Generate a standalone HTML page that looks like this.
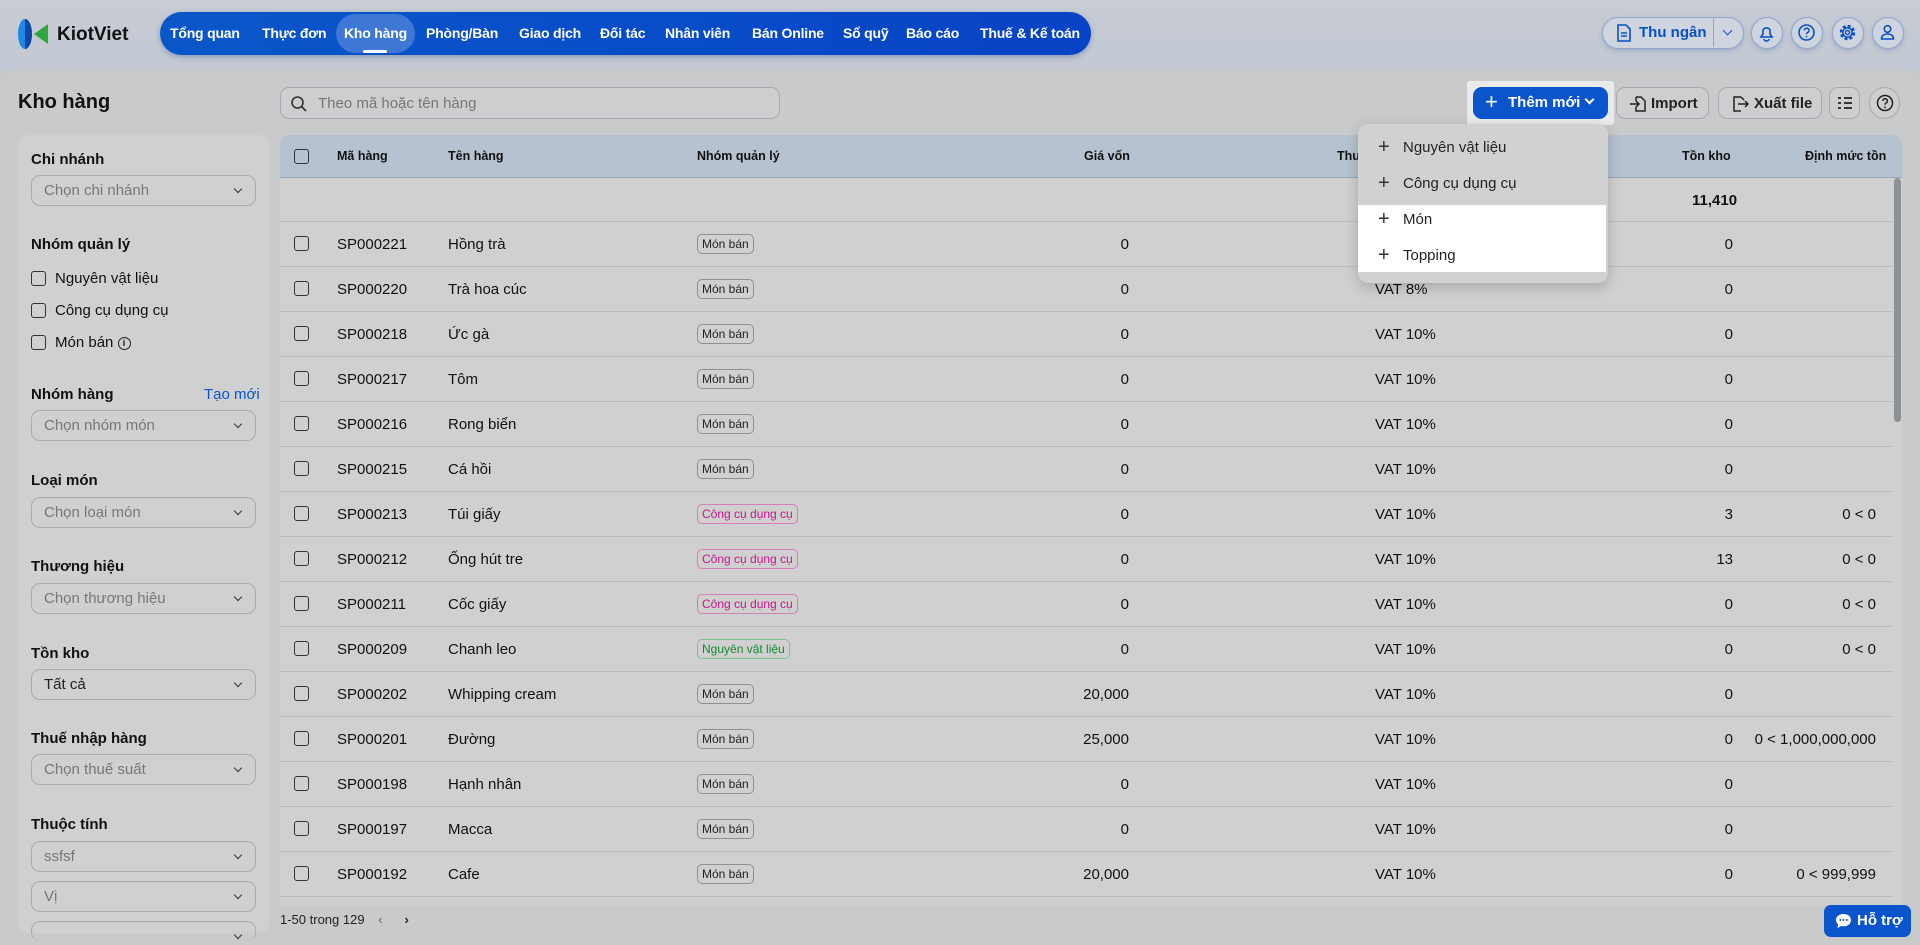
<!DOCTYPE html>
<html><head><meta charset="utf-8"><style>
*{box-sizing:border-box;margin:0;padding:0}
body{width:1920px;height:945px;overflow:hidden;font-family:"Liberation Sans",sans-serif;background:linear-gradient(180deg,#c8ccd3 0,#c2c9d4 70px,#c8c9cb 71px);position:relative;color:#111}
.a{position:absolute;white-space:nowrap}
.nav{left:160px;top:12px;width:931px;height:43px;border-radius:22px;background:linear-gradient(90deg,#0a57c9,#0743c6);box-shadow:0 2px 6px rgba(0,40,120,.3)}
.nv{position:absolute;top:13px;color:#fff;font-size:14px;font-weight:bold;letter-spacing:-0.2px}
.main{left:0;top:70px;width:1920px;height:875px;background:#c9cacc;border-radius:22px 22px 0 0}
.side{left:18px;top:135px;width:251px;height:798px;background:#d0d0d0;border-radius:10px}
.lbl{font-size:15px;font-weight:bold;color:#111}
.sel{position:absolute;left:13px;width:225px;height:31px;border:1px solid #a9abae;border-radius:9px;font-size:15px;color:#777;padding:6px 12px}
.sel:after{content:"";position:absolute;right:14px;top:10px;width:5px;height:5px;border-right:1.5px solid #333;border-bottom:1.5px solid #333;transform:rotate(45deg)}
.cb{position:absolute;width:15px;height:15px;border:1.5px solid #333;border-radius:3px}
.tbl{left:280px;top:135px;width:1622px;height:770px;background:#d0d0d0;border-radius:10px 10px 0 0;overflow:hidden}
.th{position:absolute;left:0;top:0;width:1622px;height:43px;background:#b6c2cf;border-bottom:1px solid #98a9bd}
.h{position:absolute;top:14px;font-size:12.5px;font-weight:bold;color:#111}
.row{position:absolute;left:0;width:1613px;height:45px;border-bottom:1px solid #bcbcbc;font-size:15px}
.row .c{position:absolute;top:14px}
.tag{position:absolute;top:12px;font-size:12px;border:1px solid #8f9094;border-radius:5px;padding:2px 4px;color:#222}
.pk{color:#c6168f;border-color:#d77cbc}
.gr{color:#128a2c;border-color:#7cc28f}
.btn{position:absolute;top:87px;height:32px;border:1px solid #a8aaad;border-radius:9px;font-size:15px;font-weight:bold;color:#222;background:#cdcecf}
.ic{position:absolute;top:17px;width:32px;height:32px;border-radius:50%;border:1.5px solid #8ea7cf;background:#cfd5df;box-shadow:0 2px 5px rgba(60,90,150,.25)}
.dd{left:1358px;top:124px;width:250px;height:159px;background:#d1d1d1;border-radius:10px;box-shadow:0 4px 14px rgba(0,0,0,.2);overflow:hidden}
.di{position:absolute;left:0;width:248px;height:36px;font-size:15px;color:#222}
.di span{position:absolute;left:20px;top:6px;font-size:20px;color:#333;font-weight:300}
.di b{position:absolute;left:45px;top:9px;font-weight:normal}
</style></head><body>
<svg class="a" style="left:16px;top:18px" width="36" height="32" viewBox="0 0 36 32"><ellipse cx="9" cy="16" rx="7" ry="15" fill="#1e88e5"/><path d="M9 1 A7 15 0 0 1 9 31" fill="#0d47a1"/><path d="M32 6 L18 16 L32 26 Z" fill="#2eaa3d"/></svg>
<div class="a" style="left:57px;top:24px;font-size:19px;font-weight:bold;color:#111">KiotViet</div>
<div class="a nav">
<div style="position:absolute;left:176px;top:2px;width:79px;height:39px;border-radius:20px;background:rgba(255,255,255,.22)"></div>
<div style="position:absolute;left:203px;top:38px;width:24px;height:3px;border-radius:2px;background:#fff"></div>
<span class="nv" style="left:10px">Tổng quan</span><span class="nv" style="left:102px">Thực đơn</span><span class="nv" style="left:184px">Kho hàng</span><span class="nv" style="left:266px">Phòng/Bàn</span><span class="nv" style="left:359px">Giao dịch</span><span class="nv" style="left:440px">Đối tác</span><span class="nv" style="left:505px">Nhân viên</span><span class="nv" style="left:592px">Bán Online</span><span class="nv" style="left:683px">Sổ quỹ</span><span class="nv" style="left:746px">Báo cáo</span><span class="nv" style="left:820px">Thuế &amp; Kế toán</span>
</div>
<div class="a" style="left:1602px;top:17px;width:142px;height:32px;border:1.5px solid #8ea7cf;border-radius:16px;background:#cfd5df;box-shadow:0 2px 5px rgba(60,90,150,.25)">
<svg style="position:absolute;left:13px;top:6px" width="16" height="18" viewBox="0 0 16 18"><path d="M2 1h8l4 4v12H2z M5 9h6 M5 12h6" fill="none" stroke="#0a4fc4" stroke-width="1.6"/></svg>
<span style="position:absolute;left:36px;top:6px;font-size:15px;font-weight:bold;color:#0a4fc4">Thu ngân</span>
<div style="position:absolute;left:110px;top:0;width:1px;height:29px;background:#8ea7cf"></div>
<div style="position:absolute;left:121px;top:9px;width:7px;height:7px;border-right:1.6px solid #0a4fc4;border-bottom:1.6px solid #0a4fc4;transform:rotate(45deg)"></div></div>
<div class="ic" style="left:1751px"><svg width="29" height="29" viewBox="0 0 29 29"><path d="M9 19h11l-2-3v-4a4 4 0 0 0-7 0v4z M12 21a2.5 2 0 0 0 5 0" fill="none" stroke="#0a4fc4" stroke-width="1.6"/></svg></div>
<div class="ic" style="left:1791px"><svg width="29" height="29" viewBox="0 0 29 29"><circle cx="14.5" cy="14.5" r="7.5" fill="none" stroke="#0a4fc4" stroke-width="1.6"/><path d="M12.3 12.5a2.3 2.3 0 1 1 3 2.2c-.7.3-.8.8-.8 1.6" fill="none" stroke="#0a4fc4" stroke-width="1.5"/><circle cx="14.5" cy="18.6" r=".9" fill="#0a4fc4"/></svg></div>
<div class="ic" style="left:1832px"><svg width="29" height="29" viewBox="0 0 29 29"><circle cx="14.5" cy="14.5" r="6.5" fill="none" stroke="#0a4fc4" stroke-width="2.5" stroke-dasharray="3 2.1"/><circle cx="14.5" cy="14.5" r="4.6" fill="none" stroke="#0a4fc4" stroke-width="1.5"/><circle cx="14.5" cy="14.5" r="2" fill="none" stroke="#0a4fc4" stroke-width="1.4"/></svg></div>
<div class="ic" style="left:1872px"><svg width="29" height="29" viewBox="0 0 29 29"><circle cx="14.5" cy="11" r="3.3" fill="none" stroke="#0a4fc4" stroke-width="1.6"/><path d="M8.5 21c0-3.5 2.7-5 6-5s6 1.5 6 5z" fill="none" stroke="#0a4fc4" stroke-width="1.6"/></svg></div>

<div class="a main"></div>
<div class="a" style="left:18px;top:91px;font-size:20px;font-weight:bold">Kho hàng</div>
<div class="a" style="left:280px;top:87px;width:500px;height:32px;border:1px solid #a8aaad;border-radius:9px;background:#cdcecf">
<svg style="position:absolute;left:9px;top:7px" width="18" height="18" viewBox="0 0 18 18"><circle cx="7.5" cy="7.5" r="5.5" fill="none" stroke="#333" stroke-width="1.6"/><path d="M11.5 11.5l4.5 4.5" stroke="#333" stroke-width="1.6"/></svg>
<span style="position:absolute;left:37px;top:7px;font-size:15px;color:#777">Theo mã hoặc tên hàng</span></div>

<div class="a" style="left:1467px;top:81px;width:147px;height:44px;background:#eaeaea;border-radius:3px"></div>
<div class="a" style="left:1473px;top:87px;width:135px;height:32px;background:#0a55cc;border-radius:9px;color:#fff;font-size:15px;font-weight:bold">
<span style="position:absolute;left:12px;top:2px;font-size:22px;font-weight:normal">+</span><span style="position:absolute;left:35px;top:7px">Thêm mới</span>
<div style="position:absolute;left:113px;top:9px;width:7px;height:7px;border-right:2px solid #fff;border-bottom:2px solid #fff;transform:rotate(45deg)"></div></div>
<div class="btn" style="left:1616px;width:93px"><svg style="position:absolute;left:12px;top:7px" width="18" height="18" viewBox="0 0 18 18"><path d="M7 2h5l4 4v10H7v-4 M7 6v-4 M1 9h9 M7 6l3 3-3 3" fill="none" stroke="#222" stroke-width="1.5"/></svg><span style="position:absolute;left:34px;top:7px">Import</span></div>
<div class="btn" style="left:1718px;width:104px"><svg style="position:absolute;left:12px;top:7px" width="18" height="18" viewBox="0 0 18 18"><path d="M10 2H3v14h7 M10 2l3 3 M7 9h10 M14 6l3 3-3 3" fill="none" stroke="#222" stroke-width="1.5"/></svg><span style="position:absolute;left:35px;top:7px">Xuất file</span></div>
<div class="btn" style="left:1829px;width:31px"><svg style="position:absolute;left:7px;top:8px" width="16" height="14" viewBox="0 0 16 14"><path d="M1 2h3M1 7h3M1 12h3M7 2h8M7 7h8M7 12h8" stroke="#222" stroke-width="1.8"/></svg></div>
<div class="btn" style="left:1869px;width:31px;border-radius:50%"><svg style="position:absolute;left:5px;top:5px" width="20" height="20" viewBox="0 0 20 20"><circle cx="10" cy="10" r="7.5" fill="none" stroke="#222" stroke-width="1.5"/><path d="M7.8 8a2.3 2.3 0 1 1 3 2.2c-.7.3-.8.8-.8 1.6" fill="none" stroke="#222" stroke-width="1.5"/><circle cx="10" cy="14.3" r=".9" fill="#222"/></svg></div>

<div class="a side">
<div class="a lbl" style="left:13px;top:16px">Chi nhánh</div><div class="sel" style="top:40px">Chọn chi nhánh</div>
<div class="a lbl" style="left:13px;top:101px">Nhóm quản lý</div>
<div class="cb" style="left:13px;top:136px"></div><div class="a" style="left:37px;top:135px;font-size:15px">Nguyên vật liệu</div>
<div class="cb" style="left:13px;top:168px"></div><div class="a" style="left:37px;top:167px;font-size:15px">Công cụ dụng cụ</div>
<div class="cb" style="left:13px;top:200px"></div><div class="a" style="left:37px;top:199px;font-size:15px">Món bán <span style="display:inline-block;width:13px;height:13px;border:1.3px solid #222;border-radius:50%;font-size:9px;text-align:center;line-height:11px;font-weight:bold;vertical-align:1px">i</span></div>
<div class="a lbl" style="left:13px;top:251px">Nhóm hàng</div><div class="a" style="left:186px;top:251px;font-size:15px;color:#0a55cc">Tạo mới</div>
<div class="sel" style="top:275px">Chọn nhóm món</div>
<div class="a lbl" style="left:13px;top:337px">Loại món</div><div class="sel" style="top:362px">Chọn loại món</div>
<div class="a lbl" style="left:13px;top:423px">Thương hiệu</div><div class="sel" style="top:448px">Chọn thương hiệu</div>
<div class="a lbl" style="left:13px;top:510px">Tồn kho</div><div class="sel" style="top:534px;color:#222">Tất cả</div>
<div class="a lbl" style="left:13px;top:595px">Thuế nhập hàng</div><div class="sel" style="top:619px">Chọn thuế suất</div>
<div class="a lbl" style="left:13px;top:681px">Thuộc tính</div><div class="sel" style="top:706px">ssfsf</div><div class="sel" style="top:746px">Vị</div>
<div class="sel" style="top:786px;height:20px;border-bottom:none"></div>
</div>

<div class="a tbl">
<div class="th"><div class="cb" style="left:14px;top:14px"></div>
<span class="h" style="left:57px">Mã hàng</span><span class="h" style="left:168px">Tên hàng</span><span class="h" style="left:417px">Nhóm quản lý</span><span class="h" style="left:804px">Giá vốn</span><span class="h" style="left:1057px">Thuế</span><span class="h" style="left:1402px">Tồn kho</span><span class="h" style="left:1525px">Định mức tồn</span></div>
<div class="row" style="top:43px;height:44px"><span class="c" style="left:1412px;font-weight:bold">11,410</span></div>
<div id="rows"></div>
<div style="position:absolute;left:1614px;top:43px;width:7px;height:244px;background:#8e9196;border-radius:4px"></div>
</div>
<div class="a" style="left:280px;top:912px;font-size:13px;color:#222">1-50 trong 129 <span style="margin-left:10px;color:#666">&lsaquo;</span><span style="margin-left:22px;font-weight:bold">&rsaquo;</span></div>
<div class="a" style="left:1824px;top:905px;width:87px;height:32px;background:#0a55cc;border-radius:7px;color:#fff;font-size:15px;font-weight:bold"><svg style="position:absolute;left:11px;top:8px" width="17" height="16" viewBox="0 0 17 16"><path d="M8.5 1C4 1 1 3.7 1 7c0 1.7.8 3.2 2 4.3L2.5 15l3.8-2c.7.2 1.4.3 2.2.3 4.5 0 7.5-2.8 7.5-6.2S13 1 8.5 1z" fill="#fff"/><circle cx="5.3" cy="7" r="1" fill="#0a55cc"/><circle cx="8.5" cy="7" r="1" fill="#0a55cc"/><circle cx="11.7" cy="7" r="1" fill="#0a55cc"/></svg><span style="position:absolute;left:33px;top:7px">Hỗ trợ</span></div>

<div class="a dd">
<div class="di" style="top:6px"><span>+</span><b>Nguyên vật liệu</b></div>
<div class="di" style="top:42px"><span>+</span><b>Công cụ dụng cụ</b></div>
<div style="position:absolute;left:0;top:81px;width:248px;height:67px;background:#fff"></div>
<div class="di" style="top:78px"><span>+</span><b>Món</b></div>
<div class="di" style="top:114px"><span>+</span><b>Topping</b></div>
</div>
<script>
var d=[["SP000221","Hồng trà","m","0","VAT 8%","0",""],["SP000220","Trà hoa cúc","m","0","VAT 8%","0",""],["SP000218","Ức gà","m","0","VAT 10%","0",""],["SP000217","Tôm","m","0","VAT 10%","0",""],["SP000216","Rong biển","m","0","VAT 10%","0",""],["SP000215","Cá hồi","m","0","VAT 10%","0",""],["SP000213","Túi giấy","c","0","VAT 10%","3","0 < 0"],["SP000212","Ống hút tre","c","0","VAT 10%","13","0 < 0"],["SP000211","Cốc giấy","c","0","VAT 10%","0","0 < 0"],["SP000209","Chanh leo","n","0","VAT 10%","0","0 < 0"],["SP000202","Whipping cream","m","20,000","VAT 10%","0",""],["SP000201","Đường","m","25,000","VAT 10%","0","0 < 1,000,000,000"],["SP000198","Hạnh nhân","m","0","VAT 10%","0",""],["SP000197","Macca","m","0","VAT 10%","0",""],["SP000192","Cafe","m","20,000","VAT 10%","0","0 < 999,999"]];
var h="";d.forEach(function(r,i){var t=r[2]=="m"?'<span class="tag" style="left:417px">Món bán</span>':r[2]=="c"?'<span class="tag pk" style="left:417px">Công cụ dụng cụ</span>':'<span class="tag gr" style="left:417px">Nguyên vật liệu</span>';
h+='<div class="row" style="top:'+(87+i*45)+'px"><div class="cb" style="left:14px;top:14px"></div><span class="c" style="left:57px">'+r[0]+'</span><span class="c" style="left:168px">'+r[1]+'</span>'+t+'<span class="c" style="right:764px">'+r[3]+'</span><span class="c" style="left:1095px">'+r[4]+'</span><span class="c" style="right:160px">'+r[5]+'</span><span class="c" style="right:17px">'+r[6]+'</span></div>'});
document.getElementById("rows").outerHTML=h;
</script>
</body></html>
